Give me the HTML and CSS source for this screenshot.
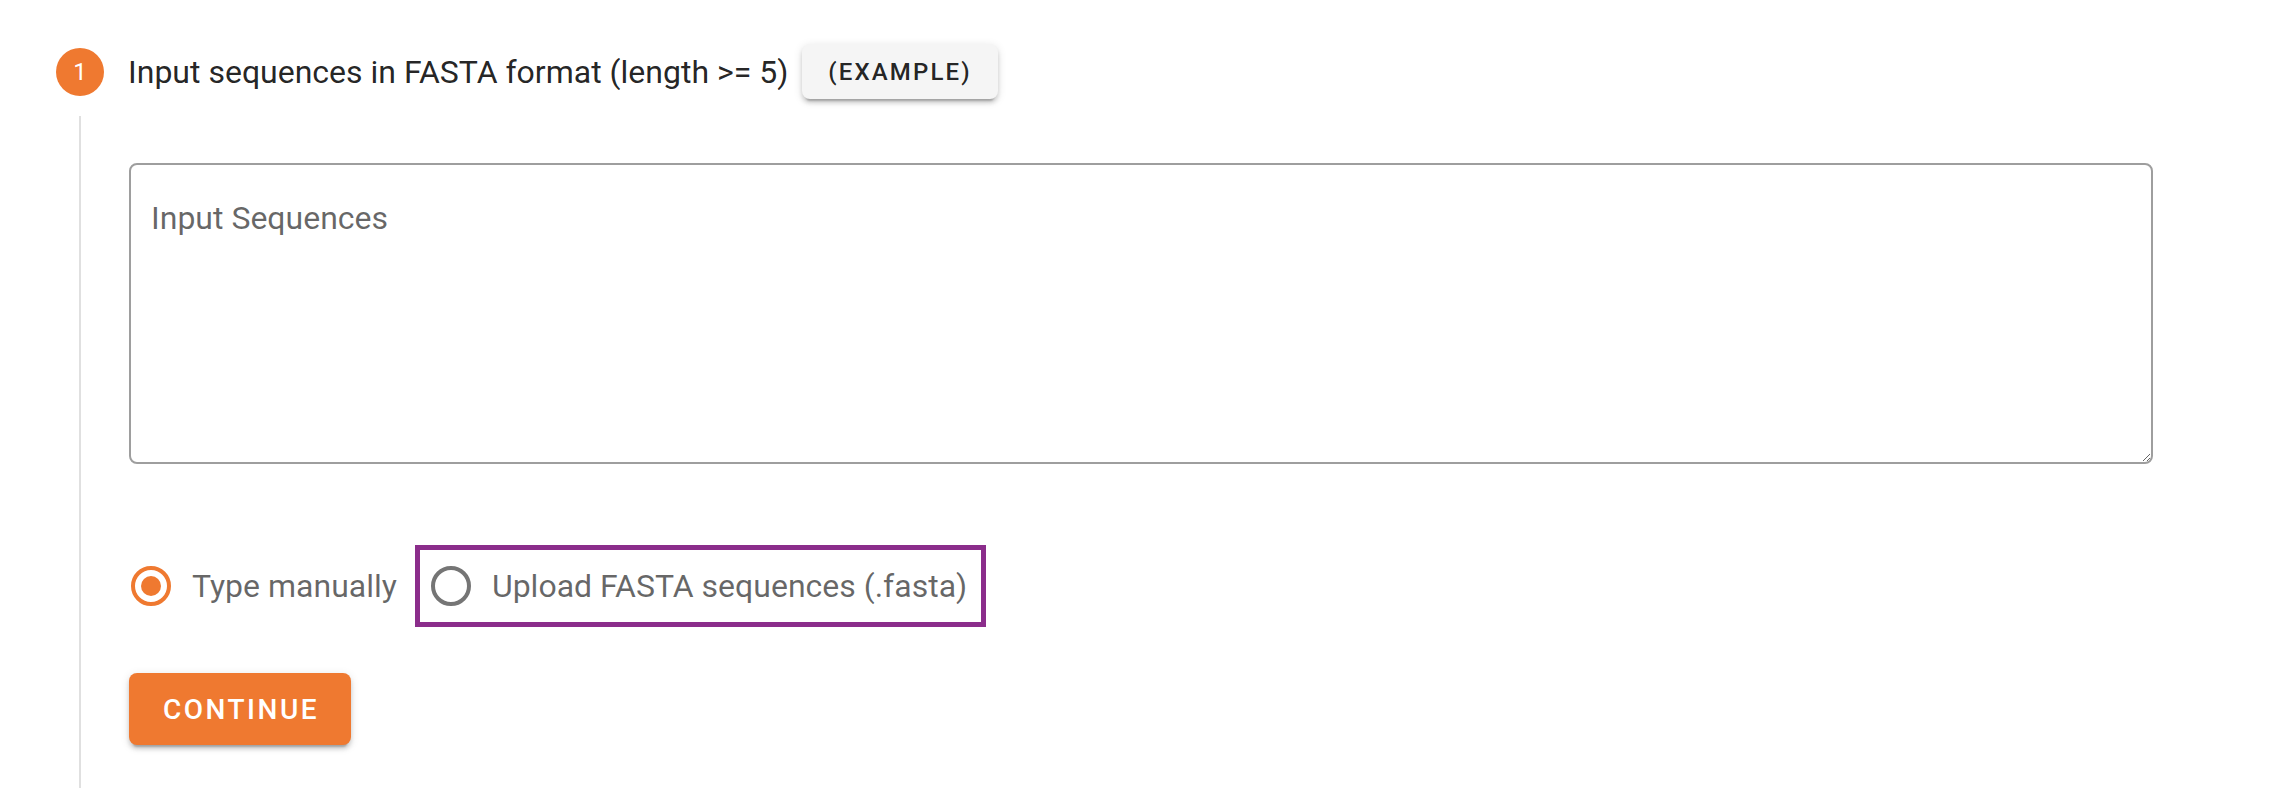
FILE: index.html
```html
<!DOCTYPE html>
<html lang="en">
<head>
<meta charset="utf-8">
<title>Stepper</title>
<link rel="stylesheet" href="styles.css">
</head>
<body>
<div class="stepper">
  <div class="step-header">
    <span class="step-num">1</span>
    <span class="step-title">Input sequences in FASTA format (length &gt;= 5)</span>
    <button class="btn-example" type="button">(EXAMPLE)</button>
  </div>
  <div class="step-content">
    <textarea class="seq-input" placeholder="Input Sequences"></textarea>
    <div class="radio-group">
      <label class="radio">
        <svg class="radio-icon checked" viewBox="0 0 24 24" width="48" height="48"><circle cx="12" cy="12" r="9" fill="none" stroke="currentColor" stroke-width="2"/><circle cx="12" cy="12" r="5" fill="currentColor"/></svg>
        <span class="radio-label">Type manually</span>
      </label>
      <label class="radio highlighted">
        <svg class="radio-icon" viewBox="0 0 24 24" width="48" height="48"><circle cx="12" cy="12" r="9" fill="none" stroke="currentColor" stroke-width="2"/></svg>
        <span class="radio-label">Upload FASTA sequences (.fasta)</span>
      </label>
    </div>
    <button class="btn-continue" type="button">CONTINUE</button>
  </div>
</div>
</body>
</html>
```

FILE: styles.css
```css
html {
  overflow: hidden;
}
body {
  margin: 0;
  background: #ffffff;
  font-family: Roboto, "Liberation Sans", Arial, sans-serif;
  color: rgba(0, 0, 0, 0.87);
}
.stepper {
  padding-top: 44px;
}
.step-header {
  display: flex;
  align-items: center;
  height: 55px;
  padding-left: 56px;
}
.step-num {
  width: 48px;
  height: 48px;
  border-radius: 50%;
  background: #ef7930;
  color: #ffffff;
  font-size: 24px;
  display: flex;
  align-items: center;
  justify-content: center;
  margin-right: 24px;
  flex-shrink: 0;
}
.step-title {
  font-size: 32px;
  color: rgba(0, 0, 0, 0.87);
}
.btn-example {
  margin-left: 14px;
  height: 55px;
  padding: 0 26px;
  border: none;
  border-radius: 8px;
  background: #f5f5f5;
  color: rgba(0, 0, 0, 0.87);
  font-family: Roboto, "Liberation Sans", Arial, sans-serif;
  font-size: 24px;
  font-weight: 500;
  letter-spacing: 2.14px;
  box-shadow: 0 6px 2px -4px rgba(0, 0, 0, 0.2), 0 4px 4px 0 rgba(0, 0, 0, 0.14), 0 2px 10px 0 rgba(0, 0, 0, 0.12);
}
.step-content {
  margin-top: 17px;
  margin-left: 79px;
  border-left: 2px solid #e0e0e0;
  padding: 47px 117px 45px 48px;
}
.seq-input {
  display: block;
  box-sizing: border-box;
  width: 100%;
  height: 301px;
  border: 2px solid #9e9e9e;
  border-radius: 8px;
  padding: 25px 20px;
  font-family: Roboto, "Liberation Sans", Arial, sans-serif;
  font-size: 32px;
  line-height: 56px;
  color: rgba(0, 0, 0, 0.87);
  background: #ffffff;
  outline: none;
}
.seq-input::placeholder {
  color: rgba(0, 0, 0, 0.6);
}
.radio-group {
  display: flex;
  align-items: center;
  margin-top: 81px;
}
.radio {
  display: flex;
  align-items: center;
  font-size: 32px;
  color: rgba(0, 0, 0, 0.6);
}
.radio-icon {
  display: block;
  color: #757575;
  margin-left: -2px;
  margin-right: 17px;
  flex-shrink: 0;
}
.radio-icon.checked {
  color: #ef7930;
}
.highlighted {
  margin-left: 18px;
  border: 5px solid #8b2d8b;
  padding: 12px 14px 12px 9px;
}
.btn-continue {
  display: block;
  margin-top: 46px;
  height: 72px;
  padding: 0 32px 0 34px;
  border: none;
  border-radius: 8px;
  background: #ef7930;
  color: #ffffff;
  font-family: Roboto, "Liberation Sans", Arial, sans-serif;
  font-size: 28px;
  font-weight: 500;
  letter-spacing: 2.5px;
  box-shadow: 0 6px 2px -4px rgba(0, 0, 0, 0.2), 0 4px 4px 0 rgba(0, 0, 0, 0.14), 0 2px 10px 0 rgba(0, 0, 0, 0.12);
}
```
